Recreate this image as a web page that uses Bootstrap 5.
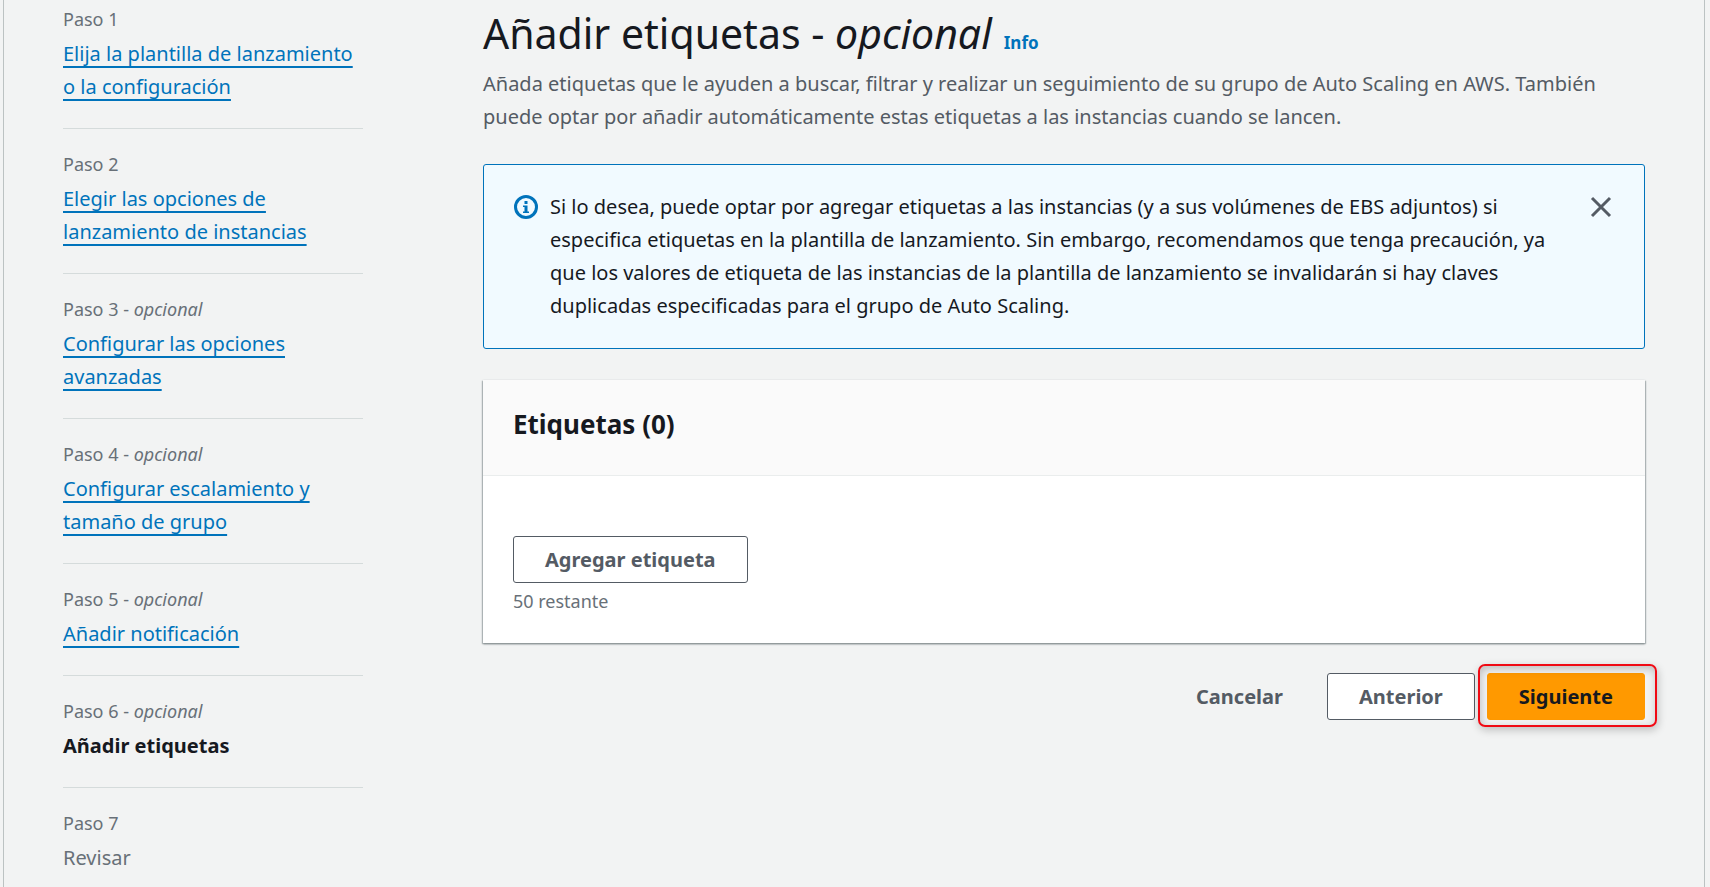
<!DOCTYPE html>
<html lang="es">
<head>
<meta charset="utf-8">
<meta name="viewport" content="width=device-width, initial-scale=1">
<title>Añadir etiquetas</title>
<link href="https://cdn.jsdelivr.net/npm/bootstrap@5.3.0/dist/css/bootstrap.min.css" rel="stylesheet">
<style>
  :root { --ink: #16191f; --muted: #687078; --body: #545b64; --blue: #0073bb; --canvas: #f2f3f3; }
  body { background: var(--canvas); color: var(--ink); font: 400 20px/33px "Noto Sans", "Open Sans", sans-serif; }
  .wizard { min-height: 100vh; margin: 0 5px 0 3px; padding: 0 59px; gap: 120px; border: solid #bcc2c2; border-width: 0 1px; }
  .steps { flex: 0 0 300px; }
  .step { padding: 23px 0 25px; border-bottom: 1px solid #d5dbdb; }
  .step:first-child { padding-top: 7px; }
  .step:last-child { border-bottom: 0; color: var(--muted); }
  .step-label { font-size: 18px; line-height: 24px; margin-bottom: 6px; color: var(--muted); }
  .step a { color: var(--blue); text-decoration: underline 2px; text-underline-offset: 5px; text-decoration-skip-ink: none; }
  .page-title { font-size: 41px; line-height: 50px; font-weight: 400; }
  .title-row { gap: 12px; }
  .info-link { font-size: 17px; font-weight: 700; color: var(--blue); text-decoration: none; }
  .intro { color: var(--body); margin: 8px 0 31px; }
  .notice { background: #f1faff; border: 1px solid var(--blue); border-radius: 3px; padding: 25px 30px 26px; margin-bottom: 31px; color: var(--ink); }
  .notice-text { padding-right: 36px; }
  .notice svg { margin-top: 1px; }
  .close-btn { color: var(--body); line-height: 1; }
  .panel { border: 0; border-radius: 0; box-shadow: 0 1px 2px 0 #7d8688, 1px 1px 1px 0 #c3c9ca, -1px 1px 1px 0 #c3c9ca; margin-bottom: 30px; }
  .panel .card-header { background: #fafafa; border-bottom: 1px solid #eaeded; border-radius: 0; padding: 28px 30px 34px; }
  .panel .card-body { padding: 60px 30px 30px; }
  .panel-title { font-size: 26px; line-height: 33px; font-weight: 700; }
  .btn { --bs-btn-padding-x: 31px; --bs-btn-padding-y: 6px; --bs-btn-font-size: 20px; --bs-btn-line-height: 33px; --bs-btn-font-weight: 700; --bs-btn-border-radius: 3px; --bs-btn-color: #545b64; }
  .btn-plain { --bs-btn-bg: #fff; --bs-btn-border-color: #545b64; }
  .btn-next { --bs-btn-bg: #ff9900; --bs-btn-border-color: #ff9900; --bs-btn-color: #16191f; }
  .actions { gap: 12px; }
  .remaining { font-size: 18px; line-height: 24px; margin-top: 6px; color: var(--muted); }
  .marked::after { content: ""; position: absolute; inset: -10px -13px -8px -10px; border: 2px solid #f00a14; border-radius: 7px; pointer-events: none; box-shadow: 1px 3px 8px rgba(0,0,0,.22), inset 1px 3px 8px rgba(0,0,0,.22); }
</style>
</head>
<body>
<div class="wizard d-flex">
  <nav class="steps" aria-label="Pasos">
    <ol class="list-unstyled mb-0">
      <li class="step"><div class="step-label">Paso 1</div><a href="#">Elija la plantilla de lanzamiento o la configuración</a></li>
      <li class="step"><div class="step-label">Paso 2</div><a href="#">Elegir las opciones de lanzamiento de instancias</a></li>
      <li class="step"><div class="step-label">Paso 3 - <em>opcional</em></div><a href="#">Configurar las opciones avanzadas</a></li>
      <li class="step"><div class="step-label">Paso 4 - <em>opcional</em></div><a href="#">Configurar escalamiento y tamaño de grupo</a></li>
      <li class="step"><div class="step-label">Paso 5 - <em>opcional</em></div><a href="#">Añadir notificación</a></li>
      <li class="step"><div class="step-label">Paso 6 - <em>opcional</em></div><strong>Añadir etiquetas</strong></li>
      <li class="step pb-0"><div class="step-label">Paso 7</div><span>Revisar</span></li>
    </ol>
  </nav>
  <main class="flex-grow-1 pt-2">
    <div class="title-row d-flex align-items-baseline">
      <h1 class="page-title mb-0">Añadir etiquetas - <em>opcional</em></h1>
      <a class="info-link" href="#">Info</a>
    </div>
    <p class="intro">Añada etiquetas que le ayuden a buscar, filtrar y realizar un seguimiento de su grupo de Auto Scaling en AWS. También puede optar por añadir automáticamente estas etiquetas a las instancias cuando se lancen.</p>
    <div class="notice alert d-flex align-items-start" role="alert">
      <div class="d-flex flex-shrink-0 pt-1 me-2"><svg width="28" height="24" viewBox="0 0 28 24" aria-hidden="true"><circle cx="12" cy="12" r="10.5" fill="none" stroke="#0073bb" stroke-width="3"/><path d="M10.500 6h3v3h-3zM9 10.500h4.500v6H15V18H9v-1.500h1.500V12H9z" fill="#0073bb"/></svg></div>
      <div class="notice-text flex-grow-1">Si lo desea, puede optar por agregar etiquetas a las instancias (y a sus volúmenes de EBS adjuntos) si especifica etiquetas en la plantilla de lanzamiento. Sin embargo, recomendamos que tenga precaución, ya que los valores de etiqueta de las instancias de la plantilla de lanzamiento se invalidarán si hay claves duplicadas especificadas para el grupo de Auto Scaling.</div>
      <button type="button" class="close-btn border-0 bg-transparent p-0 mt-1" aria-label="Cerrar"><svg width="24" height="24" viewBox="0 0 24 24" aria-hidden="true"><path d="M2 3l18 18M20 3L2 21" stroke="currentColor" stroke-width="3" fill="none"/></svg></button>
    </div>
    <section class="panel card">
      <div class="card-header"><h2 class="panel-title mb-0">Etiquetas (0)</h2></div>
      <div class="card-body">
        <button type="button" class="btn btn-plain">Agregar etiqueta</button>
        <div class="remaining">50 restante</div>
      </div>
    </section>
    <div class="actions d-flex justify-content-end">
      <button type="button" class="btn">Cancelar</button>
      <button type="button" class="btn btn-plain">Anterior</button>
      <button type="button" class="btn btn-next marked position-relative">Siguiente</button>
    </div>
  </main>
</div>
<script src="https://cdn.jsdelivr.net/npm/bootstrap@5.3.0/dist/js/bootstrap.bundle.min.js"></script>
</body>
</html>
